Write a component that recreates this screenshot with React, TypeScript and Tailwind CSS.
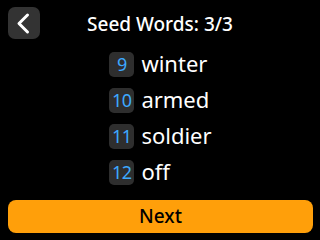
import React from "react";

const words = [
  { n: 9, w: "winter" },
  { n: 10, w: "armed" },
  { n: 11, w: "soldier" },
  { n: 12, w: "off" },
];

export default function App() {
  return (
    <div
      className="w-[320px] h-[240px] bg-black flex flex-col overflow-hidden text-white"
      style={{ fontFamily: '"Noto Sans", "Open Sans", sans-serif' }}
    >
      <div className="relative h-[45px] pt-[7px] flex items-start">
        <div className="ml-2 w-[32px] h-[32px] rounded-[7px] bg-[#333333] flex items-center justify-center">
          <svg width="32" height="32" viewBox="0 0 32 32" fill="none">
            <path d="M19.5 8 L11 16.5 L19.5 25" stroke="white" strokeWidth="3" strokeLinecap="round" strokeLinejoin="round" />
          </svg>
        </div>
        <div className="absolute left-0 right-0 top-[12px] text-center text-[19px] leading-[24px] font-medium">
          Seed Words: 3/3
        </div>
      </div>
      <div className="mt-[7px] flex justify-center">
        <div className="flex flex-col gap-[11px] pl-[1px]">
          {words.map((x) => (
            <div key={x.n} className="flex items-start h-[25px]">
              <div className="w-[25px] h-[25px] rounded-[5px] bg-[#2e2e2e] flex items-center justify-center text-[18px] leading-[25px] text-[#3da8ff] tracking-[-0.5px]">
                {x.n}
              </div>
              <div className="ml-[7px] text-[22px] leading-[23px]">{x.w}</div>
            </div>
          ))}
        </div>
      </div>
      <div className="mt-auto mb-[7px] ml-2 w-[305px] h-[33px] rounded-[8px] bg-[#ff9f0a] flex items-center justify-center text-black text-[19px] font-medium">
        Next
      </div>
    </div>
  );
}
